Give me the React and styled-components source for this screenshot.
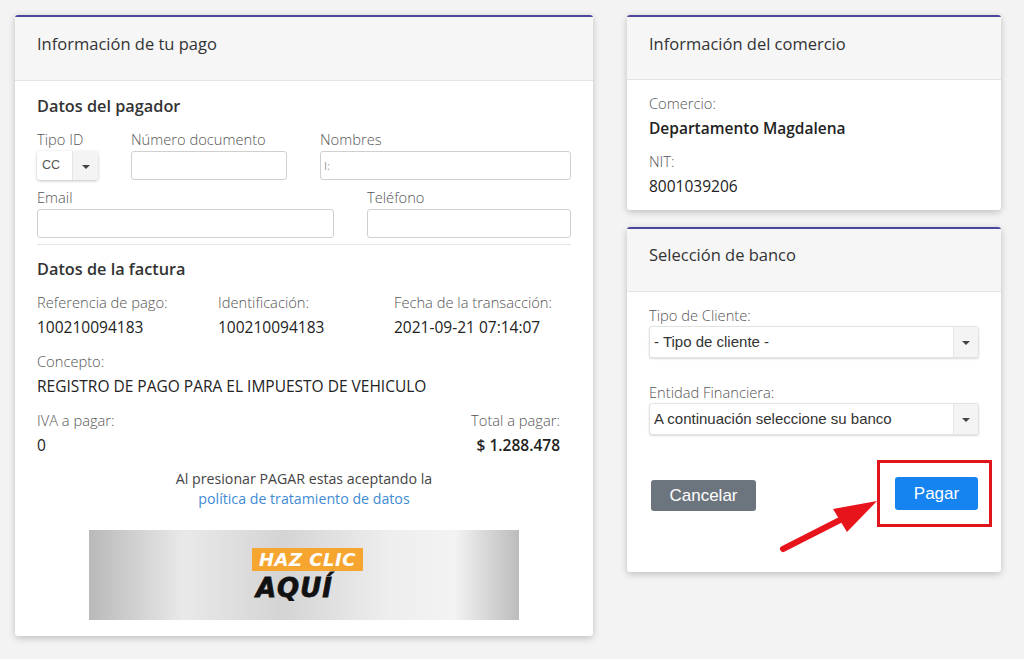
import React from 'react'
import styled, { createGlobalStyle } from 'styled-components'

const Global = createGlobalStyle`
  body {
    margin: 0;
    background: #f3f3f3;
    font-family: "Open Sans", "Noto Sans", sans-serif;
    color: #2b2b2b;
  }
  * { box-sizing: border-box; }
`

const Page = styled.div`
  display: flex;
  align-items: flex-start;
  gap: 34px;
  padding: 15px 0 0 15px;
  width: 1024px;
  height: 659px;
`

const Card = styled.div`
  position: relative;
  width: ${p => p.$w}px;
  background: #fff;
  border-top: 2px solid #4a479c;
  border-radius: 3px;
  box-shadow: 0 2px 7px rgba(0, 0, 0, 0.22);
`

const Header = styled.div`
  height: ${p => p.$h || 64}px;
  padding: ${p => p.$pt || 16}px 22px 0;
  background: #f6f6f6;
  border-bottom: 1px solid #e4e4e4;
  font-size: 16.5px;
  line-height: 22px;
  color: #333;
`

const Body = styled.div`
  padding: ${p => p.$pad};
`

const Column = styled.div`
  display: flex;
  flex-direction: column;
  gap: 17px;
`

const SectionTitle = styled.div`
  font-size: 16.3px;
  font-weight: 600;
  line-height: 20px;
  color: #333;
  margin-top: ${p => p.$mt || 0}px;
`

const Grid = styled.div`
  display: grid;
  grid-template-columns: ${p => p.$cols};
  column-gap: ${p => p.$gap ?? 33}px;
  margin-top: ${p => p.$mt || 0}px;
`

const Label = styled.div`
  font-size: 14.7px;
  line-height: 18px;
  color: #555;
  font-weight: 300;
  white-space: nowrap;
  text-align: ${p => p.$right ? 'right' : 'left'};
`

const Value = styled.div`
  font-size: 15.5px;
  line-height: 20px;
  color: #222;
  margin-top: 6px;
  white-space: nowrap;
  font-weight: ${p => p.$bold ? 600 : 400};
  text-align: ${p => p.$right ? 'right' : 'left'};
`

const Input = styled.div`
  height: 29px;
  margin-top: 3px;
  border: 1px solid #cfcfcf;
  border-radius: 3px;
  background: #fff;
  font-size: 11px;
  line-height: 27px;
  padding-left: 3px;
  color: #999;
`

const MiniSelect = styled.div`
  display: flex;
  height: 29px;
  margin-top: 3px;
  border-radius: 3px;
  box-shadow: 0 1px 3px rgba(0, 0, 0, 0.25);
  overflow: hidden;
  font-family: "Liberation Sans", Arial, sans-serif;
  font-size: 12.5px;
  color: #555;
`

const MiniText = styled.div`
  width: 35px;
  padding-left: 5px;
  line-height: 29px;
`

const Caret = styled.div`
  width: ${p => p.$w || 26}px;
  display: flex;
  align-items: center;
  justify-content: center;
  background: #f4f4f4;
  border-left: 1px solid #e6e6e6;
  &::after {
    content: '';
    border-left: 4px solid transparent;
    border-right: 4px solid transparent;
    border-top: 4px solid #444;
    margin-top: 2px;
  }
`

const Divider = styled.hr`
  border: none;
  border-top: 1px solid #e6e6e6;
  margin: 6px 0 0;
`

const Pair = styled.div`
  margin-top: ${p => p.$mt || 0}px;
`

const Row = styled.div`
  display: flex;
  justify-content: space-between;
  margin-top: 15px;
  margin-right: 11px;
`

const Consent = styled.div`
  margin-top: 14px;
  text-align: center;
  font-size: 14.2px;
  line-height: 20px;
  color: #444;
  a {
    color: #3f8bd4;
    text-decoration: none;
  }
`

const Banner = styled.div`
  width: 430px;
  height: 90px;
  margin: 21px auto 0;
  display: flex;
  flex-direction: column;
  justify-content: center;
  padding-left: 167px;
  background: linear-gradient(90deg, #b9b9b9 0%, #e9e9e9 22%, #d4d4d4 45%, #eeeeee 70%, #f3f3f3 85%, #bcbcbc 100%);
`

const ClickTag = styled.span`
  align-self: flex-start;
  background: #f6a530;
  color: #fff;
  font-family: "DejaVu Sans", sans-serif;
  font-weight: 800;
  font-style: italic;
  font-size: 18px;
  line-height: 23px;
  letter-spacing: 0.5px;
  padding: 0 7px;
  margin-left: -4px;
`

const Aqui = styled.span`
  font-family: "DejaVu Sans", sans-serif;
  font-weight: 900;
  font-style: italic;
  font-size: 26px;
  line-height: 30px;
  color: #111;
  letter-spacing: 1px;
  margin-top: 2px;
  -webkit-text-stroke: 0.8px #111;
`

const SelectBox = styled.div`
  display: flex;
  height: 32px;
  margin-top: 2px;
  background: #fff;
  border: 1px solid #e3e3e3;
  border-radius: 3px;
  box-shadow: 0 1px 2px rgba(0, 0, 0, 0.15);
  font-family: "Liberation Sans", Arial, sans-serif;
  font-size: 15px;
  color: #333;
`

const SelectText = styled.div`
  flex: 1;
  line-height: 30px;
  padding-left: 4px;
`

const Buttons = styled.div`
  display: flex;
  justify-content: space-between;
  align-items: center;
  margin: 25px -13px 0 2px;
`

const Btn = styled.button`
  font-family: "Liberation Sans", Arial, sans-serif;
  font-size: 17px;
  color: #fff;
  border: none;
  border-radius: 3px;
  width: ${p => p.$w}px;
  height: ${p => p.$h}px;
  background: ${p => p.$bg};
  padding: 0;
  margin-top: ${p => p.$mt || 0}px;
`

const Highlight = styled.div`
  width: 115px;
  height: 67px;
  border: 3px solid #e0141c;
  padding: 14px 0 0 15px;
`

const Arrow = styled.svg`
  position: absolute;
  left: 143px;
  top: 263px;
`

export default function App() {
  return (
    <>
      <Global />
      <Page>
        <Card $w={578} style={{ height: 621 }}>
          <Header>Información de tu pago</Header>
          <Body $pad="15px 22px 17px">
            <SectionTitle>Datos del pagador</SectionTitle>
            <Grid $cols="61px 156px 1fr" $mt={14}>
              <div>
                <Label>Tipo ID</Label>
                <MiniSelect>
                  <MiniText>CC</MiniText>
                  <Caret />
                </MiniSelect>
              </div>
              <div>
                <Label>Número documento</Label>
                <Input />
              </div>
              <div>
                <Label>Nombres</Label>
                <Input>I:</Input>
              </div>
            </Grid>
            <Grid $cols="297px 1fr" $mt={8}>
              <div>
                <Label>Email</Label>
                <Input />
              </div>
              <div>
                <Label>Teléfono</Label>
                <Input />
              </div>
            </Grid>
            <Divider />
            <SectionTitle $mt={14}>Datos de la factura</SectionTitle>
            <Grid $cols="181px 176px 1fr" $gap={0} $mt={14}>
              <div>
                <Label>Referencia de pago:</Label>
                <Value>100210094183</Value>
              </div>
              <div>
                <Label>Identificación:</Label>
                <Value>100210094183</Value>
              </div>
              <div>
                <Label>Fecha de la transacción:</Label>
                <Value>2021-09-21 07:14:07</Value>
              </div>
            </Grid>
            <Pair $mt={15}>
              <Label>Concepto:</Label>
              <Value>REGISTRO DE PAGO PARA EL IMPUESTO DE VEHICULO</Value>
            </Pair>
            <Row>
              <div>
                <Label>IVA a pagar:</Label>
                <Value>0</Value>
              </div>
              <div>
                <Label $right>Total a pagar:</Label>
                <Value $right $bold>$ 1.288.478</Value>
              </div>
            </Row>
            <Consent>
              Al presionar PAGAR estas aceptando la
              <br />
              <a href="#">política de tratamiento de datos</a>
            </Consent>
            <Banner>
              <ClickTag>HAZ CLIC</ClickTag>
              <Aqui>AQUÍ</Aqui>
            </Banner>
          </Body>
        </Card>

        <Column>
          <Card $w={374}>
            <Header $h={63}>Información del comercio</Header>
            <Body $pad="14px 22px 14px">
              <Label>Comercio:</Label>
              <Value $bold>Departamento Magdalena</Value>
              <Pair $mt={14}>
                <Label>NIT:</Label>
                <Value>8001039206</Value>
              </Pair>
            </Body>
          </Card>

          <Card $w={374}>
            <Header $h={63} $pt={15}>Selección de banco</Header>
            <Body $pad="14px 22px 45px">
              <Label>Tipo de Cliente:</Label>
              <SelectBox>
                <SelectText>- Tipo de cliente -</SelectText>
                <Caret $w={25} />
              </SelectBox>
              <Pair $mt={25}>
                <Label>Entidad Financiera:</Label>
                <SelectBox>
                  <SelectText>A continuación seleccione su banco</SelectText>
                  <Caret $w={25} />
                </SelectBox>
              </Pair>
              <Buttons>
                <Btn $w={105} $h={31} $bg="#6c757d" $mt={4}>Cancelar</Btn>
                <Highlight>
                  <Btn $w={83} $h={33} $bg="#1584f0">Pagar</Btn>
                </Highlight>
              </Buttons>
            </Body>
            <Arrow width="115" height="65" viewBox="0 0 115 65">
              <line x1="13" y1="57" x2="72" y2="27" stroke="#e8141b" strokeWidth="6" strokeLinecap="round" />
              <polygon points="107,9 63,17 77,40" fill="#e8141b" />
            </Arrow>
          </Card>
        </Column>
      </Page>
    </>
  )
}
